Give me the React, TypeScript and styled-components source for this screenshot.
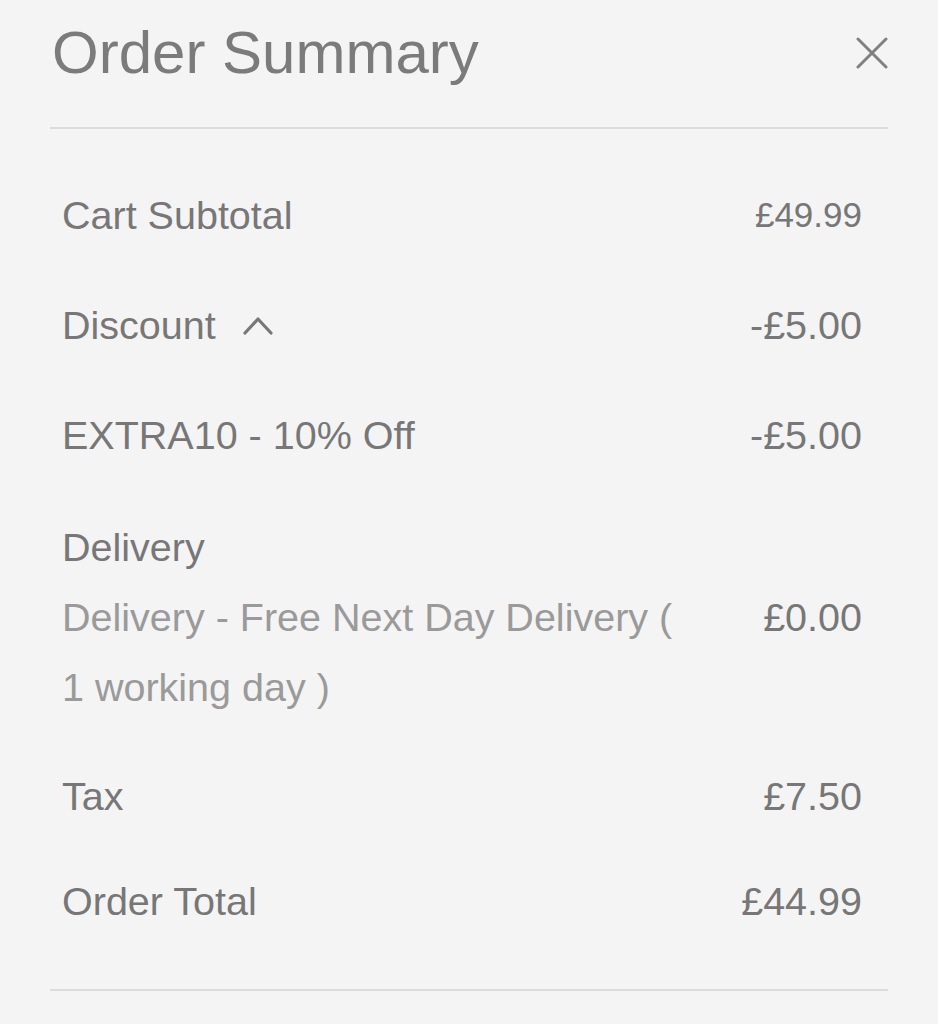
import React from 'react'
import styled, { createGlobalStyle } from 'styled-components';

const GlobalStyle = createGlobalStyle`
  html, body {
    margin: 0;
    padding: 0;
    background: #f4f4f4;
  }
  * {
    box-sizing: border-box;
  }
`;

const font = `"Liberation Sans", Helvetica, Arial, sans-serif`;

const Panel = styled.div`
  min-height: 100vh;
  background: #f4f4f4;
  padding: 0 50px;
  font-family: ${font};
  color: #777;
`;

const Header = styled.div`
  display: flex;
  justify-content: space-between;
  align-items: center;
  height: 129px;
  padding: 0 0 22px 2px;
  border-bottom: 2px solid #dcdcdc;
`;

const Title = styled.h1`
  margin: 0;
  font-size: 60px;
  font-weight: 400;
  line-height: 72px;
  color: #7b7b7b;
`;

const CloseButton = styled.button`
  display: flex;
  padding: 0;
  border: 0;
  background: none;
  cursor: pointer;
`;

const Rows = styled.div`
  padding: 31px 26px 0 12px;
`;

const Row = styled.div<{ $height?: number }>`
  display: flex;
  justify-content: space-between;
  align-items: center;
  height: ${p => p.$height || 110}px;
`;

const Label = styled.span`
  display: flex;
  align-items: center;
  gap: 27px;
  font-size: 39.5px;
  color: #777;
`;

const Amount = styled.span<{ $small?: boolean }>`
  font-size: ${p => (p.$small ? 35 : 39.5)}px;
  color: #777;
`;

const DeliveryBlock = styled.div`
  padding: 22px 0 19px;
  line-height: 70px;
`;

const DeliveryLine = styled.div`
  display: flex;
  justify-content: space-between;
  align-items: flex-start;
`;

const Description = styled.span`
  width: 632px;
  font-size: 39.5px;
  color: #9a9a9a;
`;

const Divider = styled.div`
  height: 2px;
  margin-top: 38px;
  background: #dcdcdc;
`;

const CloseIcon = () => (
  <svg width="32" height="32" viewBox="0 0 32 32" fill="none">
    <path d="M2 2L30 30M30 2L2 30" stroke="#808080" strokeWidth="3" strokeLinecap="round" />
  </svg>
);

const ChevronUp = () => (
  <svg width="30" height="19" viewBox="0 0 30 19" fill="none">
    <path d="M2 17L15 3L28 17" stroke="#787878" strokeWidth="3.2" strokeLinecap="round" strokeLinejoin="round" />
  </svg>
);

const App: React.FC = () => {
  return (
    <Panel>
      <GlobalStyle />
      <Header>
        <Title>Order Summary</Title>
        <CloseButton aria-label="Close">
          <CloseIcon />
        </CloseButton>
      </Header>
      <Rows>
        <Row>
          <Label>Cart Subtotal</Label>
          <Amount $small>£49.99</Amount>
        </Row>
        <Row>
          <Label>
            Discount
            <ChevronUp />
          </Label>
          <Amount>-£5.00</Amount>
        </Row>
        <Row>
          <Label>EXTRA10 - 10% Off</Label>
          <Amount>-£5.00</Amount>
        </Row>
        <DeliveryBlock>
          <Label>Delivery</Label>
          <DeliveryLine>
            <Description>Delivery - Free Next Day Delivery ( 1 working day )</Description>
            <Amount>£0.00</Amount>
          </DeliveryLine>
        </DeliveryBlock>
        <Row>
          <Label>Tax</Label>
          <Amount>£7.50</Amount>
        </Row>
        <Row $height={100}>
          <Label>Order Total</Label>
          <Amount>£44.99</Amount>
        </Row>
      </Rows>
      <Divider />
    </Panel>
  );
}

export default App;
